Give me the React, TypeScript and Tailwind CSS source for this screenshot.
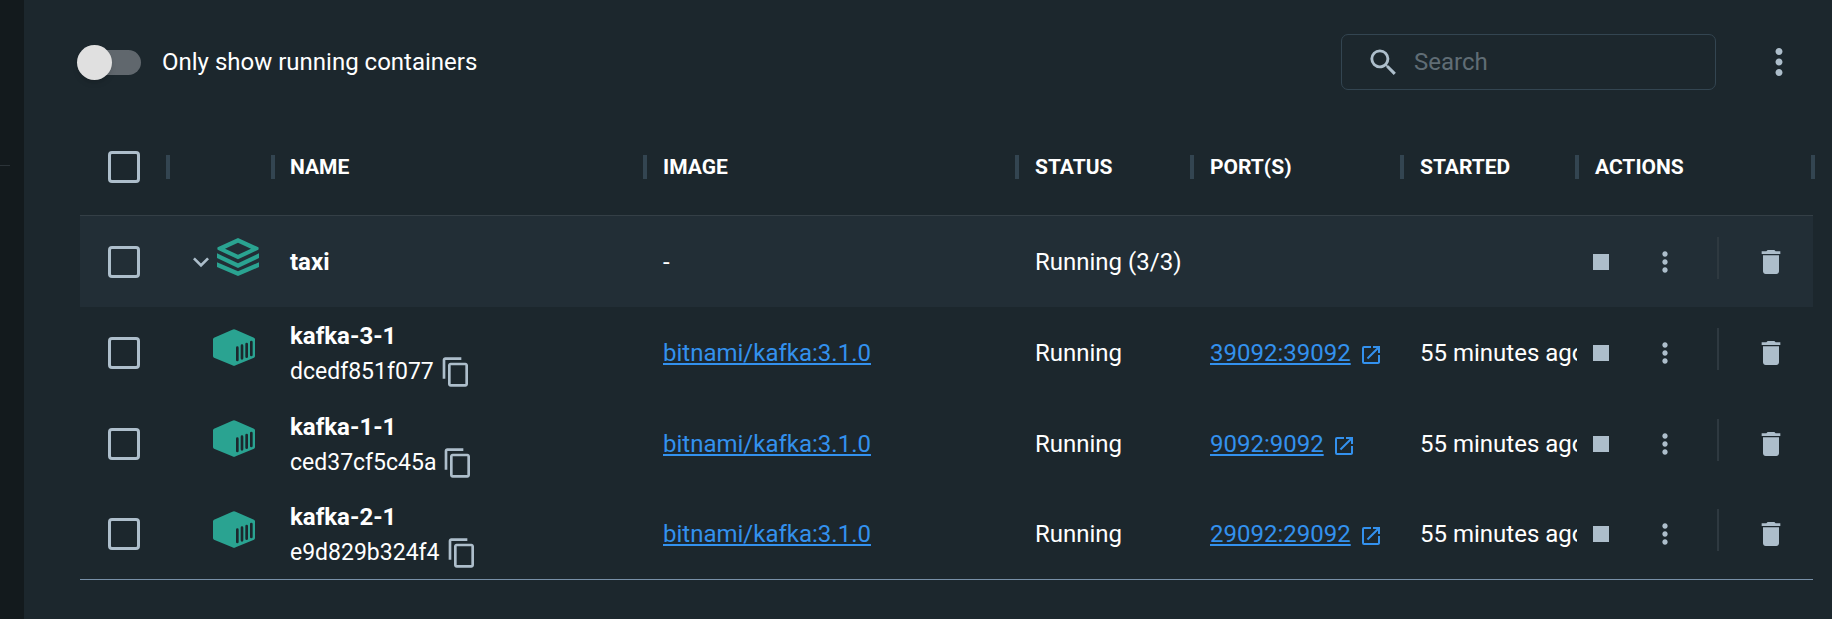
import type { ReactNode } from "react";
import {
  MdContentCopy,
  MdDelete,
  MdExpandMore,
  MdMoreVert,
  MdOpenInNew,
  MdSearch,
  MdStop,
} from "react-icons/md";

type Container = {
  name: string;
  id: string;
  image: string;
  status: string;
  port: string;
  started: string;
};

const containers: Container[] = [
  {
    name: "kafka-3-1",
    id: "dcedf851f077",
    image: "bitnami/kafka:3.1.0",
    status: "Running",
    port: "39092:39092",
    started: "55 minutes ago",
  },
  {
    name: "kafka-1-1",
    id: "ced37cf5c45a",
    image: "bitnami/kafka:3.1.0",
    status: "Running",
    port: "9092:9092",
    started: "55 minutes ago",
  },
  {
    name: "kafka-2-1",
    id: "e9d829b324f4",
    image: "bitnami/kafka:3.1.0",
    status: "Running",
    port: "29092:29092",
    started: "55 minutes ago",
  },
];

function StackIcon() {
  return (
    <svg viewBox="0 0 126 114" className="h-[38px] w-[42px] shrink-0 fill-[#2aa391]" aria-hidden="true">
      <path
        fillRule="evenodd"
        d="M63 0L124 28Q126 31 124 35L63 64L2 35Q0 31 2 28ZM63 14L24 32L63 50L102 32Z"
      />
      <path d="M0 46L63 76L126 46V60L63 90L0 60Z" />
      <path d="M0 73L63 100L126 73V87L63 114L0 87Z" />
    </svg>
  );
}

function ContainerIcon() {
  return (
    <svg viewBox="0 0 126 111" className="h-[37px] w-[42px] shrink-0" aria-hidden="true">
      <path
        className="fill-[#2aa391]"
        d="M58 2Q63 -1 68 2L123 26Q126 28 126 31V81Q126 84 123 86L68 109Q63 112 58 109L3 86Q0 84 0 81V31Q0 28 3 26Z"
      />
      <path
        className="fill-none stroke-[#1c272d]"
        strokeWidth="8"
        strokeLinecap="round"
        d="M73 56V93M87 50V88M101 45V83M115 39V78"
      />
    </svg>
  );
}

function RowCheckbox({ label }: { label: string }) {
  return (
    <input
      type="checkbox"
      aria-label={label}
      className="block size-8 appearance-none rounded-[4px] border-3 border-[#adbecb] checked:bg-[#adbecb]"
    />
  );
}

function IconButton({ label, children }: { label: string; children: ReactNode }) {
  return (
    <button type="button" aria-label={label} className="shrink-0 cursor-pointer text-[#adbecb]">
      {children}
    </button>
  );
}

function RowActions({ name }: { name: string }) {
  return (
    <div className="flex items-center pl-2">
      <div className="flex gap-8">
        <IconButton label={`Stop ${name}`}>
          <MdStop className="size-8" />
        </IconButton>
        <IconButton label={`More actions for ${name}`}>
          <MdMoreVert className="size-8" />
        </IconButton>
      </div>
      <div className="mx-9 mb-2 h-[42px] w-0.5 bg-[#2e3940]" />
      <IconButton label={`Delete ${name}`}>
        <MdDelete className="size-8" />
      </IconButton>
    </div>
  );
}

function HeaderCell({ children, className = "" }: { children: ReactNode; className?: string }) {
  return (
    <th
      scope="col"
      className={`h-[97px] border-b border-[#343f46] p-0 text-left text-[21px] font-bold ${className}`}
    >
      <div className="flex items-center justify-between">
        {children}
        <span className="-mr-0.5 h-6 w-1 bg-[#334551]" />
      </div>
    </th>
  );
}

function ContainerRow({ item }: { item: Container }) {
  return (
    <tr className="h-[91px] last:h-[90px]">
      <td className="p-0 pl-7">
        <RowCheckbox label={`Select ${item.name}`} />
      </td>
      <td className="p-0 pb-2.5 pl-[45px]">
        <ContainerIcon />
      </td>
      <td className="overflow-hidden p-0 pt-0.5 pl-[17px]">
        <div className="leading-9 font-bold">{item.name}</div>
        <div className="flex h-9 items-center gap-1.5 text-[23px]">
          {item.id}
          <IconButton label={`Copy ID of ${item.name}`}>
            <MdContentCopy className="size-8" />
          </IconButton>
        </div>
      </td>
      <td className="overflow-hidden p-0 pl-[18px]">
        <a href="#image" className="text-[#3391ee] underline">
          {item.image}
        </a>
      </td>
      <td className="overflow-hidden p-0 pl-[18px]">{item.status}</td>
      <td className="overflow-hidden p-0 pl-[18px]">
        <a href="#port" className="flex items-center gap-2 text-[#3391ee]">
          <span className="underline">{item.port}</span>
          <MdOpenInNew className="mt-1 size-6 shrink-0" />
        </a>
      </td>
      <td className="overflow-hidden p-0 pl-[18px] whitespace-nowrap">{item.started}</td>
      <td className="p-0">
        <RowActions name={item.name} />
      </td>
    </tr>
  );
}

export default function App() {
  return (
    <div className="flex min-h-screen bg-[#1c272d] font-[Roboto,sans-serif] text-2xl leading-9 text-white">
      <aside className="w-6 shrink-0 bg-[#131a1d] pt-[165px]">
        <div className="h-px w-2.5 bg-[#2b3338]" />
      </aside>

      <main className="min-w-0 flex-1 pt-[34px] pr-[19px] pl-14">
        <div className="-ml-[3px] flex h-14 items-center pr-[13px]">
          <label className="flex cursor-pointer items-center gap-[21px]">
            <input
              type="checkbox"
              role="switch"
              className="relative h-[35px] w-16 appearance-none before:absolute before:inset-y-[5px] before:right-0 before:left-1 before:rounded-full before:bg-[#60676d] after:absolute after:top-0 after:left-0 after:size-[35px] after:rounded-full after:bg-[#e0e0e0] after:shadow-md checked:after:left-[29px]"
            />
            Only show running containers
          </label>

          <label className="ml-auto flex h-14 w-[375px] items-center gap-[13px] rounded-[7px] border border-[#334551] px-6">
            <MdSearch className="size-[35px] shrink-0 text-[#adbecb]" />
            <input
              type="search"
              aria-label="Search"
              placeholder="Search"
              className="min-w-0 flex-1 bg-transparent outline-none placeholder:text-[#606d75]"
            />
          </label>

          <button type="button" aria-label="More options" className="ml-[42px] cursor-pointer text-[#adbecb]">
            <MdMoreVert className="size-[42px]" />
          </button>
        </div>

        <table className="mt-[29px] w-full table-fixed border-separate border-spacing-0 border-b border-[#7890a8]">
          <thead>
            <tr>
              <HeaderCell className="w-[88px] pl-7">
                <RowCheckbox label="Select all containers" />
              </HeaderCell>
              <HeaderCell className="w-[105px]">
                <span />
              </HeaderCell>
              <HeaderCell className="pl-[17px]">NAME</HeaderCell>
              <HeaderCell className="pl-[18px]">IMAGE</HeaderCell>
              <HeaderCell className="w-[175px] pl-[18px]">STATUS</HeaderCell>
              <HeaderCell className="w-[210px] pl-[18px]">PORT(S)</HeaderCell>
              <HeaderCell className="w-[175px] pl-[18px]">STARTED</HeaderCell>
              <HeaderCell className="w-[236px] pl-[18px]">ACTIONS</HeaderCell>
            </tr>
          </thead>
          <tbody>
            <tr className="h-[91px] bg-[#222e36]">
              <td className="p-0 pl-7">
                <RowCheckbox label="Select taxi" />
              </td>
              <td className="p-0 pl-[17px]">
                <div className="flex items-center">
                  <IconButton label="Collapse taxi">
                    <MdExpandMore className="size-8" />
                  </IconButton>
                  <div className="pb-2.5">
                    <StackIcon />
                  </div>
                </div>
              </td>
              <td className="p-0 pl-[17px] font-bold">taxi</td>
              <td className="p-0 pl-[18px]">-</td>
              <td className="p-0 pl-[18px] whitespace-nowrap">Running (3/3)</td>
              <td className="p-0" />
              <td className="p-0" />
              <td className="p-0">
                <RowActions name="taxi" />
              </td>
            </tr>
            {containers.map((item) => (
              <ContainerRow key={item.id} item={item} />
            ))}
          </tbody>
        </table>
      </main>
    </div>
  );
}
